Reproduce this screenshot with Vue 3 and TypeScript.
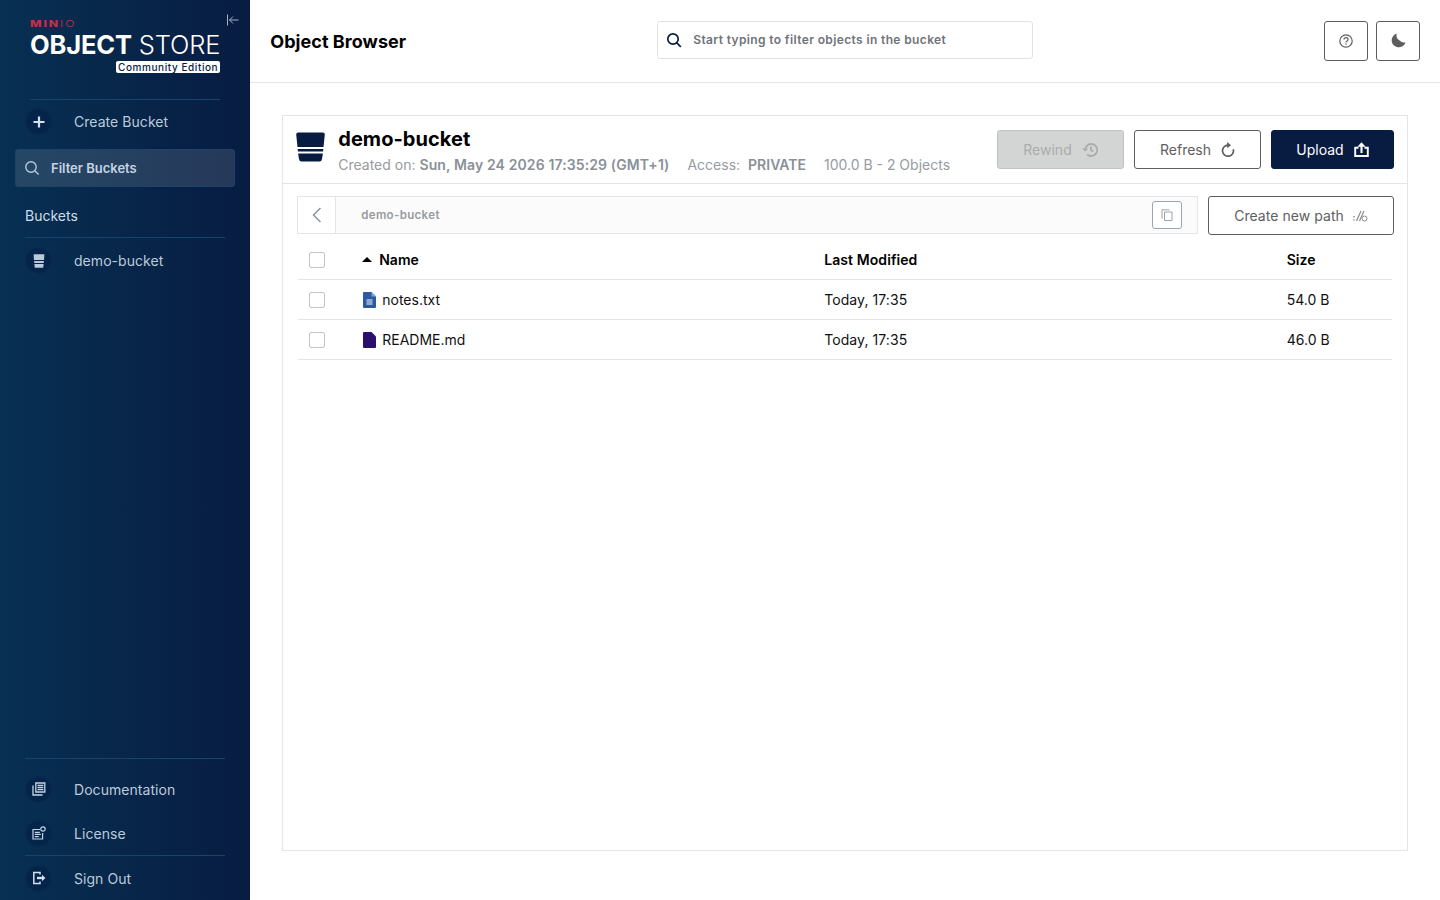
<script setup lang="ts">
interface Row { name: string; modified: string; size: string; color: string; inner: boolean }
const rows: Row[] = [
  { name: 'notes.txt', modified: 'Today, 17:35', size: '54.0 B', color: '#2d5a9e', inner: true },
  { name: 'README.md', modified: 'Today, 17:35', size: '46.0 B', color: '#2a0f6e', inner: false },
]
</script>

<template>
  <div class="page">
    <aside class="sidebar">
      <button class="collapse" aria-label="Collapse">
        <svg width="14" height="14" viewBox="0 0 14 14" fill="none" stroke="#9fb4c9" stroke-width="1">
          <path d="M1.5 1.5v11M12.5 7H3.5M7 3.5 3.5 7 7 10.5" />
        </svg>
      </button>
      <div class="logo">
        <div class="minio"><b>MIN</b><span>IO</span></div>
        <div class="store"><b>OBJECT</b> <span>STORE</span></div>
        <div class="edition">Community Edition</div>
      </div>
      <div class="rule rule-top"></div>
      <div class="nav-item first">
        <span class="disc">
          <svg width="14" height="14" viewBox="0 0 14 14"><path d="M7 1.500v11M1.500 7h11" stroke="#d4e0ec" stroke-width="2.200" /></svg>
        </span>
        <span class="nav-label">Create Bucket</span>
      </div>
      <div class="filter">
        <svg width="16" height="16" viewBox="0 0 16 16" fill="none" stroke="#b7c9da" stroke-width="1.400">
          <circle cx="7" cy="7" r="5.200" /><path d="m11 11 3.600 3.600" />
        </svg>
        <span>Filter Buckets</span>
      </div>
      <div class="section">Buckets</div>
      <div class="rule wide"></div>
      <div class="nav-item bucket-item">
        <span class="disc">
          <svg width="12" height="14" viewBox="0 0 12 14"><path d="M.6.800Q.6.300 1.200.300h9.600q.6 0 .6.500L11 6H1zM1.100 7h9.800l-.2 2H1.300zM1.400 10h9.200l-.3 3.200q-.1.600-.7.600H2.400q-.6 0-.7-.6z" fill="#b7c9da" /></svg>
        </span>
        <span class="nav-label">demo-bucket</span>
      </div>
      <div class="spacer"></div>
      <div class="rule wide"></div>
      <div class="nav-item doc">
        <span class="disc">
          <svg width="14" height="14" viewBox="0 0 14 14" fill="none" stroke="#c3d4e3" stroke-width="1.300">
            <path d="M3.800 1h9v9h-9zM5.500 3.400h5.800M5.500 5.500h5.800M5.500 7.600h5.800" /><path d="M1 3.500V13h9.500" />
          </svg>
        </span>
        <span class="nav-label">Documentation</span>
      </div>
      <div class="nav-item lic">
        <span class="disc">
          <svg width="14" height="14" viewBox="0 0 14 14" fill="none" stroke="#c3d4e3" stroke-width="1.200">
            <path d="M8 3.500H1V13h9.600V7M2.800 6.300h5M2.800 8.400h6M2.800 10.600h4" /><circle cx="11" cy="3" r="2.200" />
          </svg>
        </span>
        <span class="nav-label">License</span>
      </div>
      <div class="rule wide"></div>
      <div class="nav-item out">
        <span class="disc">
          <svg width="14" height="14" viewBox="0 0 14 14" fill="none" stroke="#d4e0ec" stroke-width="1.500">
            <path d="M8 3.600V1.400H1.800v11.200H8v-2.200" /><path d="M5 7h6" stroke-width="2.400" /><path d="M10 3.800 13.400 7 10 10.200z" fill="#d4e0ec" stroke="none" />
          </svg>
        </span>
        <span class="nav-label">Sign Out</span>
      </div>
    </aside>

    <main class="main">
      <header class="topbar">
        <h1>Object Browser</h1>
        <div class="search">
          <svg width="16" height="16" viewBox="0 0 16 16" fill="none" stroke="#081c42" stroke-width="1.700">
            <circle cx="7" cy="7" r="5.200" /><path d="m10.800 10.800 4 4" />
          </svg>
          <span>Start typing to filter objects in the bucket</span>
        </div>
        <div class="top-actions">
          <button class="icon-btn" aria-label="Help">
            <svg width="14" height="14" viewBox="0 0 14 14" fill="none" stroke="#5e5e5e" stroke-width="1.200">
              <circle cx="7" cy="7" r="6.200" /><path d="M5 5.500c0-1.200.9-1.900 2-1.900s2 .7 2 1.800c0 1.600-2 1.500-2 3.100" /><path d="M7 9.600v1.200" />
            </svg>
          </button>
          <button class="icon-btn" aria-label="Theme">
            <svg width="15" height="15" viewBox="0 0 15 15"><path d="M5.700.6A7 7 0 1 0 14.400 9.400 6 6 0 0 1 8.600 7.500 6.400 6.400 0 0 1 5.700.6z" fill="#5e5e5e" /></svg>
          </button>
        </div>
      </header>

      <section class="content">
        <div class="panel">
          <div class="bucket-head">
            <svg class="bucket-icon" width="29" height="30" viewBox="0 0 29 30">
              <path d="M.2 2.500Q.2.500 2.200.500h24.600q2 0 2 2L27.500 15h-26zM1.700 17h25.600l-.2 2.500H1.900zM2.100 21.500h24.800l-.9 5.500q-.4 2.500-2.400 2.500H5.400q-2 0-2.400-2.500z" fill="#081c42" />
            </svg>
            <div class="bucket-text">
              <div class="bucket-name">demo-bucket</div>
              <div class="bucket-meta">
                <span>Created on: <b class="date">Sun, May 24 2026 17:35:29 (GMT+1)</b></span>
                <span>Access:<b class="access">PRIVATE</b></span>
                <span>100.0 B - 2 Objects</span>
              </div>
            </div>
            <div class="head-actions">
              <button class="btn disabled">
                Rewind
                <svg width="16" height="16" viewBox="0 0 16 16" fill="none" stroke="#a9acac" stroke-width="1.800">
                  <path d="M3.200 8a6 6 0 1 1 1.800 4.300" /><path d="M0 6.400 3.200 9.400l3-3z" fill="#a9acac" stroke="none" /><path d="M9 4.500V8l2.200 1.400" />
                </svg>
              </button>
              <button class="btn">
                Refresh
                <svg width="14" height="16" viewBox="0 0 14 16" fill="none" stroke="#5e5e5e" stroke-width="1.700">
                  <path d="M7 3.200a5.500 5.500 0 1 0 5.300 4" /><path d="M6.200 0 10 3.200 6.200 6.200z" fill="#5e5e5e" stroke="none" />
                </svg>
              </button>
              <button class="btn primary">
                Upload
                <svg width="15" height="15" viewBox="0 0 15 15" fill="none" stroke="#fff" stroke-width="1.900">
                  <path d="M4.500 5.800H1.200v8.200h12.600V5.800h-3.300" /><path d="M7.500 11V3" stroke-width="2.100" /><path d="M3.400 4.800 7.500.2l4.100 4.600z" fill="#fff" stroke="none" />
                </svg>
              </button>
            </div>
          </div>

          <div class="body">
            <div class="path-row">
              <div class="breadcrumb">
                <div class="back">
                  <svg width="10" height="16" viewBox="0 0 10 16" fill="none" stroke="#8b949c" stroke-width="1.500"><path d="M8.500 1 1.500 8l7 7" /></svg>
                </div>
                <span class="crumb">demo-bucket</span>
                <button class="copy" aria-label="Copy">
                  <svg width="12" height="12" viewBox="0 0 12 12" fill="none" stroke="#9ca3ab" stroke-width="1"><path d="M3.500 3h7.500v8.500H3.500z" /><path d="M8.500.8H1v8.700" /></svg>
                </button>
              </div>
              <button class="btn new-path">
                Create new path
                <svg width="15" height="12" viewBox="0 0 15 12" fill="none" stroke="#8b8b8b" stroke-width="1">
                  <path d="M1 6v1.400M1 9.200v1.400" stroke-width="1.400" /><path d="M3.500 11 8 1M6.500 11 11 1" stroke-width="1.200" /><circle cx="11.500" cy="8.500" r="2.500" />
                </svg>
              </button>
            </div>

            <div class="table">
              <div class="tr th">
                <span class="check"></span>
                <span class="c-name"><i class="sort"></i>Name</span>
                <span class="c-mod">Last Modified</span>
                <span class="c-size">Size</span>
              </div>
              <div v-for="r in rows" :key="r.name" class="tr">
                <span class="check"></span>
                <span class="c-name file">
                  <svg width="13" height="16" viewBox="0 0 13 16">
                    <path d="M1 0h7.500L13 4.500V15a1 1 0 0 1-1 1H1a1 1 0 0 1-1-1V1a1 1 0 0 1 1-1z" :fill="r.color" />
                    <path v-if="r.inner" d="M8.500 0 13 4.500H8.500z" fill="#7fa3d6" />
                    <rect v-if="r.inner" x="3.500" y="7" width="6" height="6" fill="#8fa9d0" />
                  </svg>
                  {{ r.name }}
                </span>
                <span class="c-mod">{{ r.modified }}</span>
                <span class="c-size">{{ r.size }}</span>
              </div>
            </div>
          </div>
        </div>
      </section>
    </main>
  </div>
</template>

<style>
html, body { margin: 0; background: #fff; }
</style>

<style scoped>
* { box-sizing: border-box; }
.page {
  display: flex;
  height: 900px;
  overflow: hidden;
  font-family: Inter, "Liberation Sans", sans-serif;
  color: #000;
}
button { font-family: inherit; }

.sidebar {
  position: relative;
  flex: 0 0 250px;
  display: flex;
  flex-direction: column;
  background: linear-gradient(90deg, #073052 0%, #081c42 100%);
  color: #bccbd9;
  font-size: 14px;
}
.collapse {
  position: absolute;
  top: 13px;
  right: 10px;
  padding: 0;
  border: 0;
  background: none;
  line-height: 0;
}
.logo {
  display: flex;
  flex-direction: column;
  padding: 18px 30px 0;
  height: 99px;
}
.minio {
  font-size: 9.500px;
  line-height: 11px;
  letter-spacing: 1.500px;
  color: #c72e49;
  white-space: nowrap;
  transform: scaleX(1.280);
  transform-origin: left center;
}
.minio b { font-weight: 800; }
.minio span { font-weight: 300; }
.store {
  font-size: 25.500px;
  line-height: 28px;
  white-space: nowrap;
  color: #fff;
  letter-spacing: -0.170px;
  margin-top: 2px;
}
.store b { font-weight: 700; }
.store span { font-weight: 300; }
.edition {
  align-self: flex-end;
  margin-top: 2px;
  padding: 0 2px;
  background: #fff;
  border-radius: 2px;
  color: #081c42;
  font-size: 10px;
  font-weight: 500;
  letter-spacing: 0.570px;
  line-height: 12px;
  white-space: nowrap;
}
.rule { height: 1px; background: #13456f; flex: none; }
.rule-top { margin: 0 30px; }
.rule.wide { margin: 0 25px; }
.nav-item {
  display: flex;
  align-items: center;
  height: 44px;
  padding-left: 25px;
  flex: none;
  letter-spacing: 0.050px;
}
.first { height: 43px; margin-bottom: 6px; }
.bucket-item { height: 45px; }
.disc {
  flex: none;
  width: 27px;
  height: 27px;
  margin-right: 22px;
  border-radius: 50%;
  background: #05244a;
  border: 1px solid #092a55;
  display: flex;
  align-items: center;
  justify-content: center;
}
.nav-label { color: #bccbd9; }
.filter {
  margin: 0 15px;
  height: 38px;
  flex: none;
  display: flex;
  align-items: center;
  gap: 11px;
  padding-left: 8px;
  background: rgba(255, 255, 255, 0.12);
  border: 1px solid #1c4468;
  border-radius: 3px;
  color: #c4d4e3;
  font-size: 13px;
  font-weight: 600;
}
.section {
  margin: 19px 0 0 25px;
  height: 31px;
  line-height: 20px;
  color: #d0dde9;
  flex: none;
}
.spacer { flex: 1; }
.doc { margin-top: 8px; }
.out { height: 44px; margin-bottom: 0; }

.main { flex: 1; display: flex; flex-direction: column; min-width: 0; }
.topbar {
  height: 83px;
  flex: none;
  display: flex;
  align-items: center;
  padding: 0 20px;
  border-bottom: 1px solid #e5e5e5;
  position: relative;
}
h1 {
  margin: 0;
  font-size: 18px;
  font-weight: 700;
  color: #000;
  width: 387px;
  letter-spacing: 0.050px;
  white-space: nowrap;
}
.search {
  width: 376px;
  height: 38px;
  margin-top: -3px;
  border: 1px solid #e2e2e2;
  border-radius: 3px;
  display: flex;
  align-items: center;
  gap: 11px;
  padding-left: 8px;
  font-size: 12px;
  letter-spacing: 0.370px;
  font-weight: 600;
  color: #6f7479;
}
.top-actions { margin-left: auto; display: flex; gap: 8px; margin-top: -1px; }
.icon-btn {
  width: 44px;
  height: 40px;
  padding: 0;
  background: #fff;
  border: 1px solid #5e5e5e;
  border-radius: 3px;
  display: flex;
  align-items: center;
  justify-content: center;
}

.content { flex: 1; padding: 32px 32px 49px; min-height: 0; }
.panel {
  height: 100%;
  border: 1px solid #e5e5e5;
  display: flex;
  flex-direction: column;
}
.bucket-head {
  height: 68px;
  flex: none;
  display: flex;
  align-items: center;
  padding: 0 13px;
  border-bottom: 1px solid #e5e5e5;
}
.bucket-icon { flex: none; margin-right: 13px; margin-top: -5px; }
.bucket-text { flex: 1; min-width: 0; margin-top: 2px; }
.bucket-name { font-size: 20px; font-weight: 700; line-height: 24px; letter-spacing: 0.050px; }
.bucket-meta {
  display: flex;
  gap: 18px;
  font-size: 14px;
  line-height: 20px;
  margin-top: 4px;
  color: #969ba1;
  white-space: nowrap;
}
.bucket-meta b { font-weight: 600; color: #8a9097; }
.date { letter-spacing: 0.120px; }
.access { margin-left: 8px; }
.head-actions { display: flex; gap: 10px; flex: none; }
.btn {
  height: 39px;
  width: 127px;
  padding: 0;
  background: #fff;
  border: 1px solid #5e5e5e;
  border-radius: 3px;
  color: #5e5e5e;
  font-size: 14px;
  display: flex;
  align-items: center;
  justify-content: center;
  gap: 10px;
}
.btn.disabled { background: #d3d5d4; border-color: #c0c3c2; color: #a9acac; }
.btn.primary { background: #081c42; border-color: #081c42; color: #fff; width: 123px; }
.body { flex: 1; padding: 12px 13px 0 14px; }
.path-row { display: flex; gap: 10px; }
.breadcrumb {
  flex: 1;
  height: 38px;
  display: flex;
  align-items: center;
  border: 1px solid #e5e5e5;
  background: #fbfbfb;
}
.back {
  width: 38px;
  height: 100%;
  flex: none;
  background: #fff;
  border-right: 1px solid #e5e5e5;
  display: flex;
  align-items: center;
  padding-left: 14px;
}
.crumb { margin-left: 25px; font-size: 11.500px; letter-spacing: 0.350px; font-weight: 600; color: #969ba1; }
.copy {
  margin-left: auto;
  margin-right: 15px;
  width: 30px;
  height: 28px;
  padding: 0;
  background: #fff;
  border: 1px solid #9aa5b2;
  border-radius: 3px;
  display: flex;
  align-items: center;
  justify-content: center;
}
.new-path { width: 186px; height: 39px; font-size: 14px; letter-spacing: 0.050px; gap: 9px; }
.table { margin-top: 5px; margin-left: 1px; padding-right: 2px; }
.tr {
  display: flex;
  align-items: center;
  height: 40px;
  border-bottom: 1px solid #e5e5e5;
  font-size: 14px;
  color: #111;
}
.check {
  flex: none;
  width: 16px;
  height: 16px;
  margin-left: 11px;
  margin-right: 37px;
  border: 1px solid #c4c4c4;
  border-radius: 2px;
  background: #fff;
}
.c-name { width: 462px; flex: none; display: flex; align-items: center; gap: 6px; }
.c-mod { width: 462.500px; flex: none; letter-spacing: 0.080px; }
.th { font-weight: 600; color: #000; }
.sort {
  width: 0;
  height: 0;
  margin-right: 1px;
  border-left: 5px solid transparent;
  border-right: 5px solid transparent;
  border-bottom: 5px solid #000;
}
.file { padding-left: 1px; }
</style>
